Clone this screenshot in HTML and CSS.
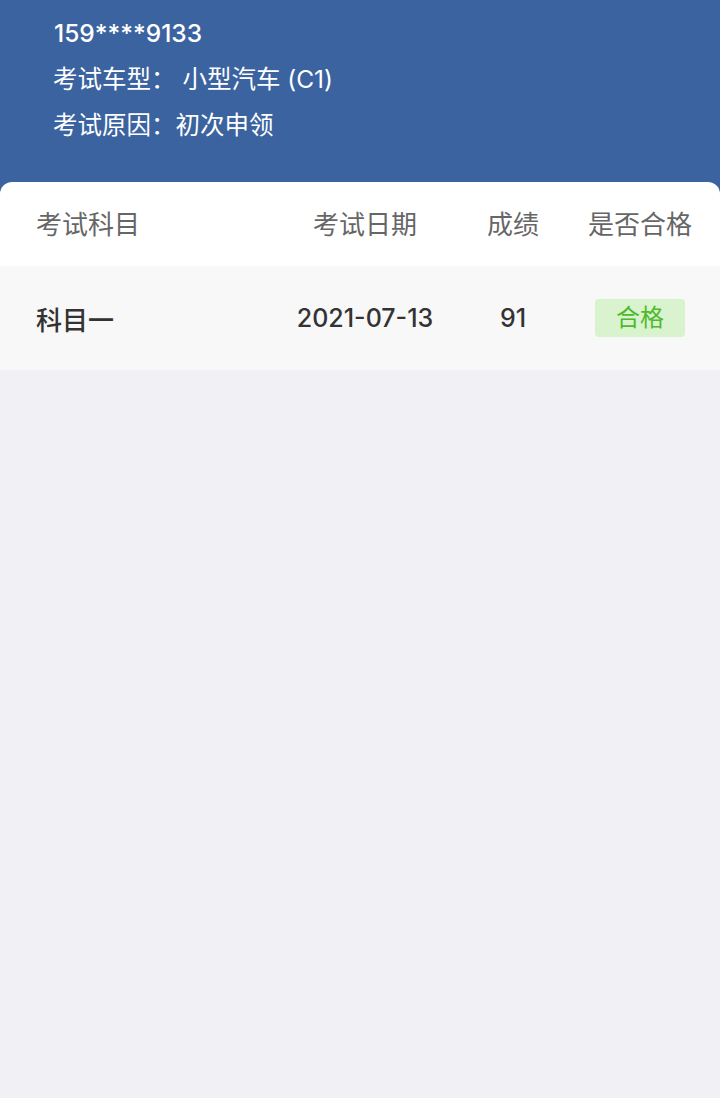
FILE: index.html
```html
<!DOCTYPE html>
<html lang="zh-CN">
<head>
  <meta charset="UTF-8">
  <title>考试成绩</title>
  <meta name="viewport" content="width=device-width, initial-scale=1.0">
  <link rel="stylesheet" href="styles.css">
</head>
<body>

<div class="cabecera">
  <div class="telefono">159****9133</div>
  <div class="linea">考试车型： 小型汽车 (C1)</div>
  <div class="linea">考试原因：初次申领</div>
</div>

<div class="tarjeta">
  <div class="fila titulos">
    <div class="col-izq">考试科目</div>
    <div>考试日期</div>
    <div>成绩</div>
    <div>是否合格</div>
  </div>
  <div class="fila datos">
    <div class="col-izq">科目一</div>
    <div>2021-07-13</div>
    <div>91</div>
    <div><span class="aprobado">合格</span></div>
  </div>
</div>

</body>
</html>
```

FILE: styles.css
```css
body {
  margin: 0;
  background: #f1f0f5;
  font-family: Inter, "Noto Sans CJK SC", sans-serif;
}
.cabecera {
  background: #3b63a0;
  color: #fff;
  padding: 10px 0 24px 54px;
  height: 160px;
}
.telefono { font-size: 24.5px; line-height: 46px; font-weight: 500; }
.linea { font-size: 24.5px; line-height: 46px; margin-left: -1px; }
.tarjeta {
  margin-top: -12px;
  background: #fff;
  border-radius: 12px 12px 0 0;
  overflow: hidden;
}
.fila {
  display: grid;
  grid-template-columns: 1fr 146px 150px 104px;
  align-items: center;
  padding: 0 28px 0 36px;
  text-align: center;
  font-size: 25px;
}
.fila .col-izq { text-align: left; font-size: 26px; }
.titulos { height: 84px; color: #666; font-size: 26px; padding-bottom: 3px; box-sizing: border-box; }
.datos { height: 104px; background: #f8f8f8; color: #333; font-weight: 500; }
.aprobado {
  display: inline-block;
  width: 90px;
  height: 38px;
  line-height: 38px;
  border-radius: 4px;
  background: #d9f3cf;
  color: #4fba2c;
  font-weight: 400;
  font-size: 24px;
}
```
